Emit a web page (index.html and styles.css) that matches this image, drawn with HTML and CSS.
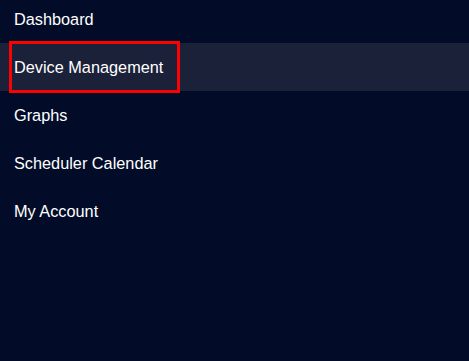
FILE: index.html
```html
<!DOCTYPE html>
<html lang="en">

<head>
    <meta charset="UTF-8" />
    <meta name="viewport" content="width=device-width, initial-scale=1.0" />
    <link rel="stylesheet" href="styles.css">
    <title>Menu</title>
</head>

<body>
    <nav class="side-menu">
        <ul class="menu-list">
            <li class="menu-item"><a href="#" class="menu-link">Dashboard</a></li>
            <li class="menu-item active"><a href="#" class="menu-link focused">Device Management</a></li>
            <li class="menu-item"><a href="#" class="menu-link">Graphs</a></li>
            <li class="menu-item"><a href="#" class="menu-link">Scheduler Calendar</a></li>
            <li class="menu-item"><a href="#" class="menu-link">My Account</a></li>
        </ul>
    </nav>
</body>

</html>
```
FILE: styles.css
```css
* {
    margin: 0;
    padding: 0;
    box-sizing: border-box;
}

html,
body {
    height: 100%;
}

body {
    background-color: #020c29;
    font-family: 'Liberation Sans', Arial, sans-serif;
    overflow: hidden;
}

.side-menu {
    width: 100%;
}

.menu-list {
    list-style: none;
    margin-top: -5px;
}

.menu-item {
    display: flex;
    align-items: center;
    height: 48px;
}

.menu-item.active {
    background-color: #1b2139;
}

.menu-link {
    display: flex;
    align-items: center;
    height: 100%;
    padding-left: 14px;
    color: #ffffff;
    font-size: 16.3px;
    text-decoration: none;
}

.menu-link.focused {
    margin-left: 9px;
    padding-left: 2px;
    width: 171px;
    height: 52px;
    border: 3px solid #ff0000;
}
```
